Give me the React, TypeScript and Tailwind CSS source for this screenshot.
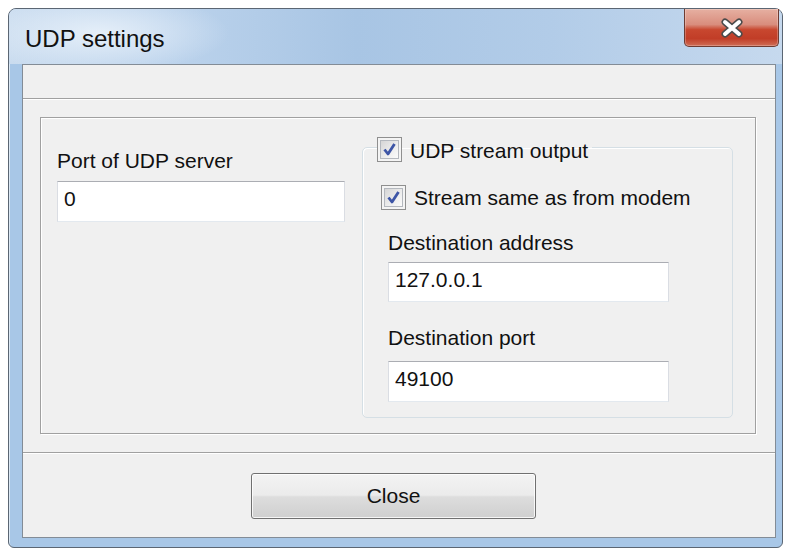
import type { ReactNode } from 'react'

// Diálogo "UDP settings" con marco estilo Windows 7 (Aero Basic).

const font = "font-['Liberation_Sans',Arial,sans-serif]"

// ─── Casilla marcada ──────────────────────────────────────────────────────────

function CheckBox() {
  return (
    <span className="flex h-[25px] w-[25px] shrink-0 items-center justify-center border border-[#8f8f8f] bg-[#f4f4f4]">
      <span className="flex h-[19px] w-[19px] items-center justify-center border border-[#b4b8be] bg-[linear-gradient(135deg,#d6d6d6_0%,#eeeeee_60%,#fbfbfb_100%)]">
        <svg width="17" height="17" viewBox="0 0 17 17">
          <path d="M3.5 8.5 L7 13 L13.5 3" fill="none" stroke="#3d55a6" strokeWidth="2.8" strokeLinejoin="round" />
        </svg>
      </span>
    </span>
  )
}

// ─── Caja de texto (sólo lectura) ─────────────────────────────────────────────

function TextBox({ value, className }: { value: string; className: string }) {
  return (
    <div
      className={`flex items-start border border-t-[#abadb3] border-l-[#dadde3] border-r-[#dadde3] border-b-[#e3e9ef] bg-white pl-[6px] pt-[5px] text-[21px] leading-[24px] text-[#111] ${className}`}
    >
      {value}
    </div>
  )
}

function Label({ children, className = '' }: { children: ReactNode; className?: string }) {
  return <div className={`text-[21px] leading-[24px] text-[#111] ${className}`}>{children}</div>
}

// ─── Botón de cerrar de la barra de título ────────────────────────────────────

function CloseCaption() {
  return (
    <div className="absolute right-[3px] top-0 flex h-[38px] w-[95px] items-center justify-center rounded-b-[5px] border border-t-0 border-[#6e3b32] bg-[linear-gradient(180deg,#e6b0a2_0%,#d98d7d_42%,#c8472f_56%,#c13d27_80%,#cf6d56_100%)] shadow-[inset_0_0_0_1px_rgba(255,255,255,0.25)]">
      <svg width="26" height="20" viewBox="0 0 26 20">
        <path d="M6 4 L20 16 M20 4 L6 16" stroke="#4b4b4b" strokeWidth="7" strokeLinecap="round" />
        <path d="M6 4 L20 16 M20 4 L6 16" stroke="#ffffff" strokeWidth="4" strokeLinecap="round" />
      </svg>
    </div>
  )
}

export default function App() {
  return (
    <div className={`min-h-[550px] bg-white pl-[8px] pt-[8px] ${font}`}>
      {/* Ventana */}
      <div className="flex h-[540px] w-[775px] flex-col rounded-t-[8px] rounded-b-[6px] border border-[#5b6673] bg-[#a8c7e7] shadow-[inset_1px_1px_0_rgba(255,255,255,0.6)]">
        {/* Barra de título */}
        <div className="relative h-[55px] shrink-0 rounded-t-[7px] bg-[radial-gradient(ellipse_130px_40px_at_90px_24px,rgba(235,243,251,0.85),transparent),linear-gradient(90deg,#cadcef_0%,#bcd3ec_20%,#a8c5e4_45%,#b2cce8_70%,#c6d9ee_100%)] pl-[16px] pt-[16px]">
          <div className="text-[24px] leading-[28px] text-[#111]">UDP settings</div>
          <CloseCaption />
        </div>

        {/* Área cliente */}
        <div className="ml-[13px] mr-[6px] flex h-[474px] w-[754px] flex-col border border-[#838c96] bg-[#f0f0f0]">
          {/* Franja superior vacía */}
          <div className="h-[34px] shrink-0 border-b border-[#a0a0a0]" />

          {/* Panel principal */}
          <div className="h-[353px] shrink-0 border-t border-white pl-[17px] pt-[17px]">
            <div className="flex h-[317px] w-[716px] items-start border border-[#a0a0a0] shadow-[inset_1px_1px_0_#ffffff,1px_1px_0_#ffffff]">
              {/* Puerto del servidor */}
              <div className="ml-[16px] mt-[31px] w-[288px]">
                <Label>Port of UDP server</Label>
                <TextBox value="0" className="mt-[8px] h-[41px] w-[288px]" />
              </div>

              {/* Salida UDP */}
              <fieldset className="ml-[17px] mt-[19px] w-[371px] rounded-[5px] border border-[#d5dfe5] px-0 pb-[15px] shadow-[inset_1px_1px_0_#ffffff]">
                <legend className="ml-[14px] flex h-[20px] items-start pr-[4px]">
                  <CheckBox />
                  <span className="ml-[8px] mt-[2px] text-[21px] leading-[24px] text-[#111]">UDP stream output</span>
                </legend>

                <div className="ml-[18px] mt-[28px] flex h-[25px] items-center">
                  <CheckBox />
                  <span className="ml-[8px] text-[21px] leading-[24px] text-[#111]">Stream same as from modem</span>
                </div>

                <Label className="ml-[25px] mt-[21px]">Destination address</Label>
                <TextBox value="127.0.0.1" className="ml-[25px] mt-[7px] h-[40px] w-[281px]" />

                <Label className="ml-[25px] mt-[24px]">Destination port</Label>
                <TextBox value="49100" className="ml-[25px] mt-[11px] h-[41px] w-[281px]" />
              </fieldset>
            </div>
          </div>

          {/* Zona del botón */}
          <div className="flex-1 border-t border-[#a0a0a0] pl-[228px] pt-[20px] shadow-[inset_0_1px_0_#ffffff]">
            <button className="flex h-[46px] w-[285px] items-center justify-center rounded-[3px] border border-[#707070] bg-[linear-gradient(180deg,#f3f3f3_0%,#ebebeb_48%,#dddddd_52%,#cfcfcf_100%)] text-[21px] leading-[24px] text-[#111] shadow-[inset_0_0_0_1px_rgba(255,255,255,0.8)]">
              Close
            </button>
          </div>
        </div>
      </div>
    </div>
  )
}
